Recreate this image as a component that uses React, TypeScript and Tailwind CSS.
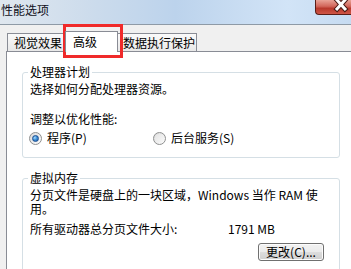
import React from 'react';

const Radio: React.FC<{ checked?: boolean }> = ({ checked }) => (
  <span className="relative flex h-[13px] w-[13px] shrink-0 items-center justify-center rounded-full border border-[#8e8f8f] bg-[linear-gradient(135deg,#d8d8d8,#ffffff)]">
    {checked ? (
      <span className="h-[7px] w-[7px] rounded-full border border-[#1d4f91] bg-[radial-gradient(circle_at_35%_35%,#a8dcff_0%,#3d8fd6_45%,#1c5ba6_100%)]" />
    ) : (
      <span className="h-[9px] w-[9px] rounded-full bg-[linear-gradient(135deg,#e4e4e4,#f8f8f8)]" />
    )}
  </span>
);

const GroupBox: React.FC<{ title: string; className?: string; children: React.ReactNode }> = ({
  title,
  className,
  children,
}) => (
  <div className={`flex w-[318px] flex-col rounded-[3px] border border-[#d5dfe5] ${className ?? ''}`}>
    <span className="-mt-[8px] ml-[5px] flex h-[14px] items-center self-start bg-white px-[2px]">{title}</span>
    {children}
  </div>
);

export default function App() {
  return (
    <div className="relative h-[269px] w-[351px] overflow-hidden bg-[#f0f0f0] font-['Noto_Sans_CJK_SC',sans-serif] text-[12px] leading-[14px] text-black">
      {/* title bar */}
      <div className="flex h-[25px] items-start justify-between border-b border-[#8e9aa6] bg-[linear-gradient(90deg,#dfe7ef_0%,#cddcec_25%,#bcd3ec_50%,#d2e4f7_82%,#c6dbf1_100%)]">
        <span className="mt-[3px] flex h-[14px] items-center pl-[1px] text-[#101020]">性能选项</span>
        <div className="h-[15px] w-[36px] overflow-hidden rounded-bl-[4px] border-b border-l border-[#5a1d16] bg-[linear-gradient(180deg,#e9a397_0%,#d2665a_45%,#b8392c_60%,#cf5646_100%)]">
          <svg width="36" height="15" viewBox="0 0 36 15">
            <path d="M21 0 L29 9 M29 0 L21 9" stroke="#4a1a14" strokeWidth="5" strokeLinecap="square" />
            <path d="M21 0 L29 9 M29 0 L21 9" stroke="#ffffff" strokeWidth="3" strokeLinecap="square" />
          </svg>
        </div>
      </div>

      {/* tabs */}
      <div className="flex h-[26px] items-end pl-[7px]">
        <div className="flex h-[18px] w-[60px] items-center border border-b-0 border-[#898c95] bg-[linear-gradient(180deg,#fafafa,#e8e8e8)] pl-[6px]">
          视觉效果
        </div>
        <div className="relative z-10 -mx-[2px] -mb-px flex h-[21px] w-[53px] items-center border border-b-0 border-[#898c95] bg-white pl-[7px]">
          高级
        </div>
        <div className="flex h-[18px] w-[81px] items-center border border-b-0 border-[#898c95] bg-[linear-gradient(180deg,#fafafa,#e8e8e8)] pl-[6px]">
          数据执行保护
        </div>
      </div>

      {/* tab pane */}
      <div className="ml-[6px] flex h-[240px] flex-col border-l border-t border-[#898c95] bg-white pl-[15px] pt-[20px]">
        <GroupBox title="处理器计划" className="h-[86px]">
          <span className="mt-[3px] flex h-[14px] items-center pl-[7px]">选择如何分配处理器资源。</span>
          <span className="mt-[16px] flex h-[14px] items-center pl-[7px]">调整以优化性能:</span>
          <div className="mt-[5px] flex h-[14px] items-center pl-[6px]">
            <div className="flex w-[124px] items-center gap-[5px]">
              <Radio checked />
              <span>程序(P)</span>
            </div>
            <div className="flex items-center gap-[5px]">
              <Radio />
              <span>后台服务(S)</span>
            </div>
          </div>
        </GroupBox>

        <GroupBox title="虚拟内存" className="mt-[20px] h-[110px]">
          <span className="mt-[3px] flex h-[14px] items-center whitespace-nowrap pl-[7px]">
            分页文件是硬盘上的一块区域，Windows 当作 RAM 使
          </span>
          <span className="flex h-[14px] items-center pl-[7px]">用。</span>
          <div className="mt-[6px] flex h-[14px] items-center pl-[7px]">
            <span className="w-[198px]">所有驱动器总分页文件大小:</span>
            <span>1791 MB</span>
          </div>
          <div className="mt-[7px] flex justify-end pr-[15px]">
            <button className="flex h-[18px] w-[66px] items-center justify-center rounded-[3px] border border-[#707070] bg-[linear-gradient(180deg,#f2f2f2_0%,#ebebeb_50%,#dddddd_50%,#cfcfcf_100%)] shadow-[inset_0_0_0_1px_#fcfcfc]">
              更改(C)...
            </button>
          </div>
        </GroupBox>
      </div>

      {/* red highlight annotation */}
      <div className="absolute left-[63px] top-[24px] h-[34px] w-[60px] border-[3px] border-[#f02a2a]" />
    </div>
  );
}
